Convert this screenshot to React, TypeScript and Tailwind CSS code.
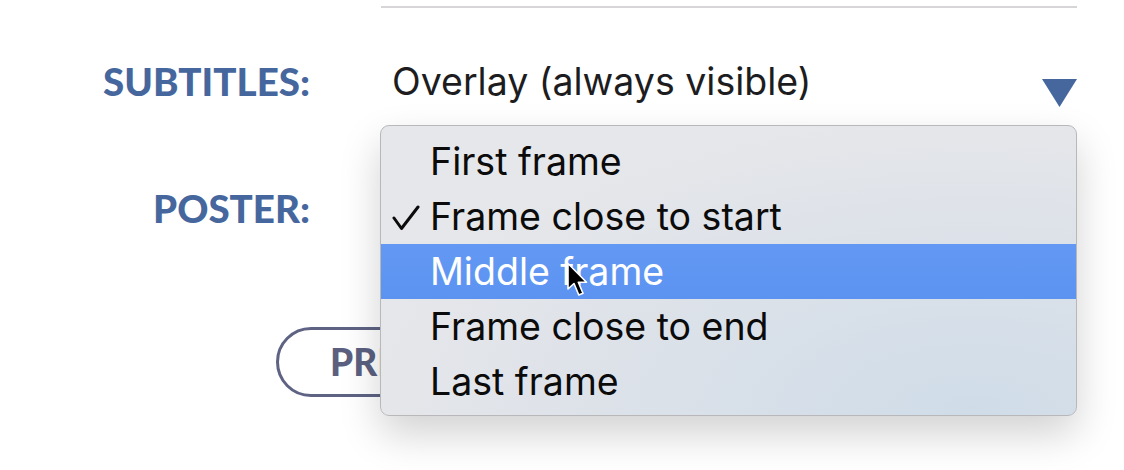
const options = [
  'First frame',
  'Frame close to start',
  'Middle frame',
  'Frame close to end',
  'Last frame',
]

function Cursor() {
  return (
    <svg width="22" height="36" viewBox="0 0 22 36" className="absolute left-[185px] top-[18px]">
      <path
        d="M2 1.5 L2 27 L8 21.5 L12.8 33 L17 31.2 L12.3 20.2 L20.5 20.2 Z"
        fill="#000"
        stroke="#fff"
        strokeWidth="1.6"
        strokeLinejoin="round"
      />
    </svg>
  )
}

function Check() {
  return (
    <svg width="28" height="26" viewBox="0 0 28 26" fill="none" stroke="#0b0b0b" strokeWidth="3" strokeLinecap="round" strokeLinejoin="round">
      <path d="M2 13 L9.5 23.5 L26 2" />
    </svg>
  )
}

function Menu() {
  return (
    <div className="absolute left-0 top-[67px] w-[697px] rounded-[9px] border border-[#b8b8bb] bg-[radial-gradient(ellipse_at_85%_100%,#cfdce8_0%,#dde2e9_45%,#e6e7ea_75%)] pt-[8px] pb-[6px] shadow-[0_18px_40px_rgba(0,0,0,0.18)]">
      {options.map((o, i) => {
        const active = i === 2
        return (
          <div
            key={o}
            className={
              'relative flex h-[55px] items-center text-[37.5px] leading-none ' +
              (active ? 'bg-[linear-gradient(#6399f4,#5c93f1)] text-white' : 'text-[#0b0b0b]')
            }
          >
            <span className="flex w-[49px] pl-[11px] pt-[3px]">{i === 1 && <Check />}</span>
            <span>{o}</span>
            {active && <Cursor />}
          </div>
        )
      })}
    </div>
  )
}

function Triangle() {
  return (
    <svg width="35" height="28" viewBox="0 0 35 28">
      <path d="M0 0 H35 L17.5 28 Z" fill="#46679d" />
    </svg>
  )
}

export default function App() {
  return (
    <div className="h-[470px] w-[1124px] overflow-hidden bg-white font-['Inter','Liberation_Sans',sans-serif]">
      <div className="ml-[381px] mt-[6px] h-[2px] w-[696px] bg-[#d7d5d8]" />

      <div className="mt-[50px] grid grid-cols-[310px_697px] gap-x-[70px]">
        {/* subtitles */}
        <div className="pt-[4px] text-right font-['Lato',sans-serif] text-[38.5px] font-black leading-none text-[#46679d]">
          SUBTITLES:
        </div>
        <div className="relative h-[131px]">
          <div className="flex items-start justify-between pl-[12px]">
            <span className="text-[37.5px] leading-[48px] text-[#1d1d1f]">Overlay (always visible)</span>
            <div className="pt-[21px]">
              <Triangle />
            </div>
          </div>
          <Menu />
        </div>

        {/* poster */}
        <div className="text-right font-['Lato',sans-serif] text-[38.5px] font-black leading-none text-[#46679d]">
          POSTER:
        </div>
        <div className="h-[138px]" />
      </div>

      <div className="ml-[276px] flex h-[70px] w-[300px] items-center rounded-full border-[3px] border-[#5e6384] pl-[51px] font-['Lato',sans-serif] text-[37px] font-black text-[#5b6080]">
        PREVIEW
      </div>
    </div>
  )
}
